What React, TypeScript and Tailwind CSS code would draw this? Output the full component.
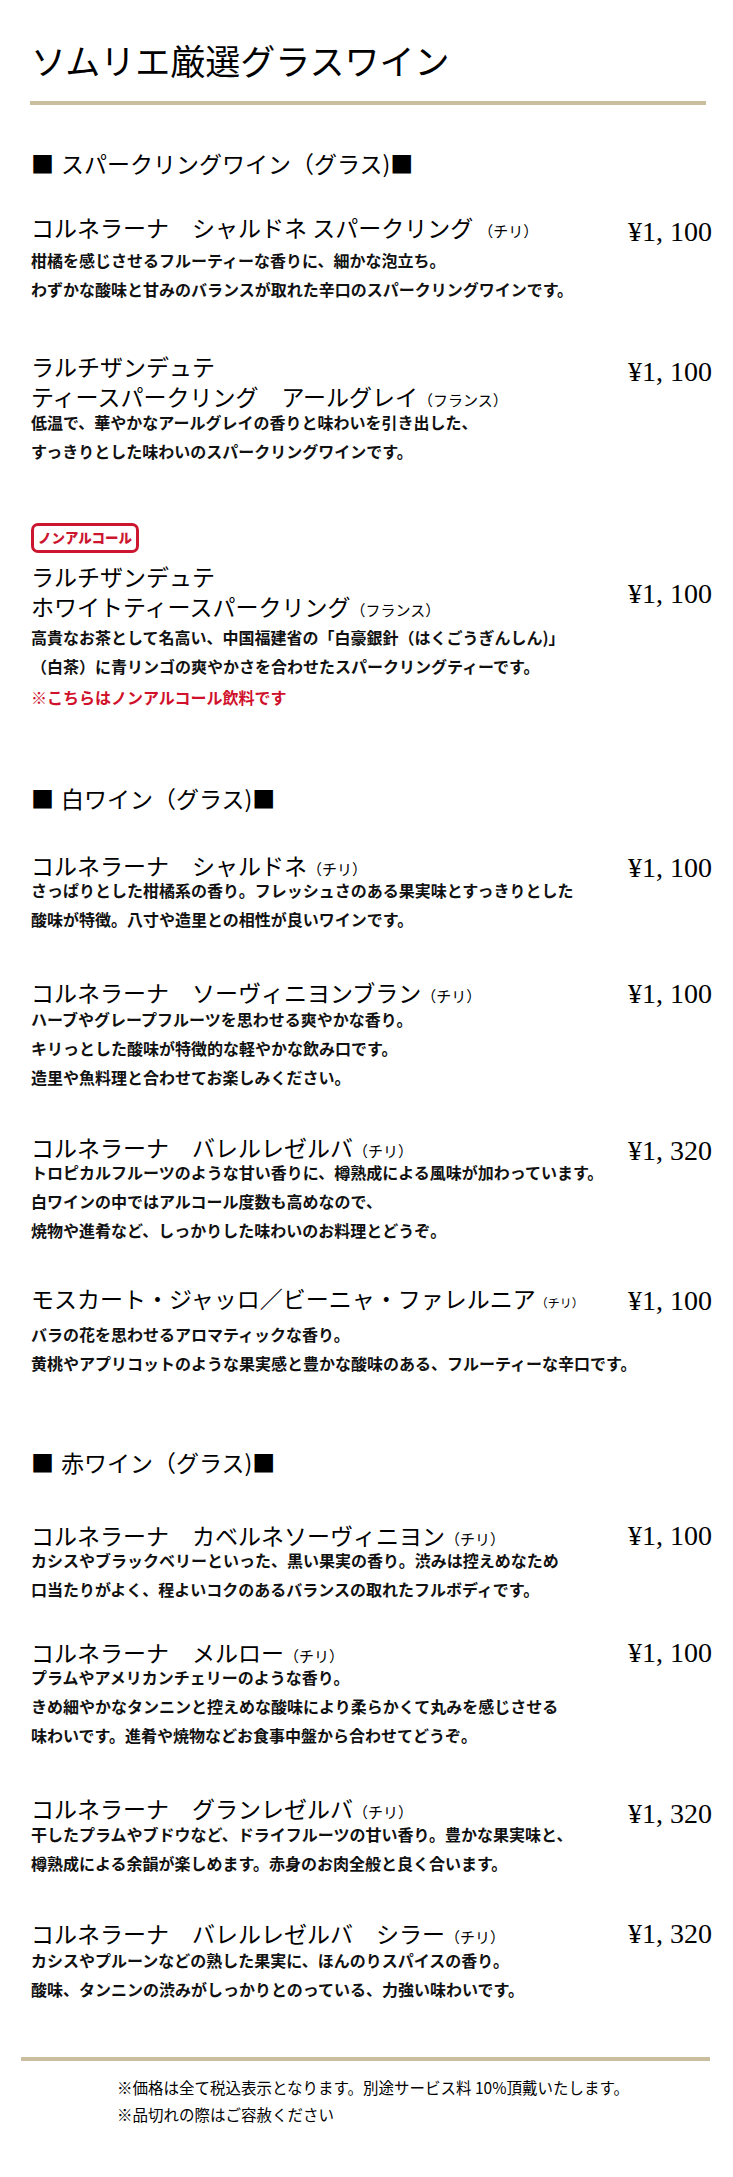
type Wine = {
  top: string;
  badge?: string;
  names: string[];
  origin: string;
  originSize?: string;
  price: string;
  priceTop: string;
  descTop: string;
  desc: string[];
  note?: string;
};

type Section = {
  top: string;
  title: string;
  wines: Wine[];
};

const SECTIONS: Section[] = [
  {
    top: 'mt-[43px]',
    title: 'スパークリングワイン（グラス)',
    wines: [
      {
        top: 'mt-[34px]',
        names: ['コルネラーナ　シャルドネ スパークリング '],
        origin: '（チリ）',
        price: '¥1, 100',
        priceTop: 'mt-[5px]',
        descTop: 'mt-[4px]',
        desc: [
          '柑橘を感じさせるフルーティーな香りに、細かな泡立ち。',
          'わずかな酸味と甘みのバランスが取れた辛口のスパークリングワインです。',
        ],
      },
      {
        top: 'mt-[47px]',
        names: ['ラルチザンデュテ', 'ティースパークリング　アールグレイ'],
        origin: '（フランス）',
        price: '¥1, 100',
        priceTop: 'mt-[6px]',
        descTop: '-mt-[3px]',
        desc: [
          '低温で、華やかなアールグレイの香りと味わいを引き出した、',
          'すっきりとした味わいのスパークリングワインです。',
        ],
      },
      {
        top: 'mt-[57px]',
        badge: 'ノンアルコール',
        names: ['ラルチザンデュテ', 'ホワイトティースパークリング'],
        origin: '（フランス）',
        price: '¥1, 100',
        priceTop: 'mt-[18px]',
        descTop: 'mt-[2px]',
        desc: [
          '高貴なお茶として名高い、中国福建省の「白豪銀針（はくごうぎんしん)」',
          '（白茶）に青リンゴの爽やかさを合わせたスパークリングティーです。',
        ],
        note: '※こちらはノンアルコール飲料です',
      },
    ],
  },
  {
    top: 'mt-[71px]',
    title: '白ワイン（グラス)',
    wines: [
      {
        top: 'mt-[37px]',
        names: ['コルネラーナ　シャルドネ'],
        origin: '（チリ）',
        price: '¥1, 100',
        priceTop: 'mt-[3px]',
        descTop: '-mt-[4px]',
        desc: [
          'さっぱりとした柑橘系の香り。フレッシュさのある果実味とすっきりとした',
          '酸味が特徴。八寸や造里との相性が良いワインです。',
        ],
      },
      {
        top: 'mt-[43px]',
        names: ['コルネラーナ　ソーヴィニヨンブラン'],
        origin: '（チリ）',
        price: '¥1, 100',
        priceTop: 'mt-[2px]',
        descTop: '-mt-[2px]',
        desc: [
          'ハーブやグレープフルーツを思わせる爽やかな香り。',
          'キリっとした酸味が特徴的な軽やかな飲み口です。',
          '造里や魚料理と合わせてお楽しみください。',
        ],
      },
      {
        top: 'mt-[40px]',
        names: ['コルネラーナ　バレルレゼルバ'],
        origin: '（チリ）',
        price: '¥1, 320',
        priceTop: 'mt-[4px]',
        descTop: '-mt-[4px]',
        desc: [
          'トロピカルフルーツのような甘い香りに、樽熟成による風味が加わっています。',
          '白ワインの中ではアルコール度数も高めなので、',
          '焼物や進肴など、しっかりした味わいのお料理とどうぞ。',
        ],
      },
      {
        top: 'mt-[38px]',
        names: ['モスカート・ジャッロ／ビーニャ・ファレルニア'],
        origin: '（チリ）',
        originSize: 'text-[12px]',
        price: '¥1, 100',
        priceTop: 'mt-[3px]',
        descTop: 'mt-[7px]',
        desc: [
          'バラの花を思わせるアロマティックな香り。',
          '黄桃やアプリコットのような果実感と豊かな酸味のある、フルーティーな辛口です。',
        ],
      },
    ],
  },
  {
    top: 'mt-[69px]',
    title: '赤ワイン（グラス)',
    wines: [
      {
        top: 'mt-[43px]',
        names: ['コルネラーナ　カベルネソーヴィニヨン'],
        origin: '（チリ）',
        price: '¥1, 100',
        priceTop: 'mt-[1px]',
        descTop: '-mt-[4px]',
        desc: [
          'カシスやブラックベリーといった、黒い果実の香り。渋みは控えめなため',
          '口当たりがよく、程よいコクのあるバランスの取れたフルボディです。',
        ],
      },
      {
        top: 'mt-[33px]',
        names: ['コルネラーナ　メルロー'],
        origin: '（チリ）',
        price: '¥1, 100',
        priceTop: 'mt-[1px]',
        descTop: '-mt-[4px]',
        desc: [
          'プラムやアメリカンチェリーのような香り。',
          'きめ細やかなタンニンと控えめな酸味により柔らかくて丸みを感じさせる',
          '味わいです。進肴や焼物などお食事中盤から合わせてどうぞ。',
        ],
      },
      {
        top: 'mt-[43px]',
        names: ['コルネラーナ　グランレゼルバ'],
        origin: '（チリ）',
        price: '¥1, 320',
        priceTop: 'mt-[6px]',
        descTop: '-mt-[3px]',
        desc: [
          '干したプラムやブドウなど、ドライフルーツの甘い香り。豊かな果実味と、',
          '樽熟成による余韻が楽しめます。赤身のお肉全般と良く合います。',
        ],
      },
      {
        top: 'mt-[40px]',
        names: ['コルネラーナ　バレルレゼルバ　シラー'],
        origin: '（チリ）',
        price: '¥1, 320',
        priceTop: 'mt-[1px]',
        descTop: '-mt-[2px]',
        desc: [
          'カシスやプルーンなどの熟した果実に、ほんのりスパイスの香り。',
          '酸味、タンニンの渋みがしっかりとのっている、力強い味わいです。',
        ],
      },
    ],
  },
];

function WineItem({ wine }: { wine: Wine }) {
  const lastName = wine.names.length - 1;

  return (
    <div className={wine.top}>
      {wine.badge && (
        <div className="mb-[8px] flex h-[30px] w-[108px] items-center justify-center rounded-[7px] border-[3px] border-[#cc1630] text-[13.5px] font-black leading-none text-[#cc1630]">
          {wine.badge}
        </div>
      )}
      <div className="flex items-start justify-between">
        <div className="min-w-0">
          {wine.names.map((name, index) => (
            <p className="whitespace-pre text-[23px] leading-[30px]" key={name}>
              {name}
              {index === lastName && (
                <span className={[wine.originSize ?? 'text-[15px]', 'leading-none'].join(' ')}>
                  {wine.origin}
                </span>
              )}
            </p>
          ))}
          <div className={wine.descTop}>
            {wine.desc.map((line) => (
              <p className="whitespace-nowrap text-[16px] font-bold leading-[29px] text-[#111]" key={line}>
                {line}
              </p>
            ))}
            {wine.note && (
              <p className="mt-[2px] whitespace-nowrap text-[16px] font-bold leading-[29px] text-[#d0112b]">
                {wine.note}
              </p>
            )}
          </div>
        </div>
        <p
          className={[
            "shrink-0 whitespace-pre font-['Liberation_Serif',serif] text-[28px] leading-[30px]",
            wine.priceTop,
          ].join(' ')}
        >
          {wine.price}
        </p>
      </div>
    </div>
  );
}

export default function App() {
  return (
    <div className="min-h-[2177px] bg-white font-['Noto_Sans_CJK_JP',sans-serif] text-black">
      <div className="ml-[31px] w-[681px] pb-[51px] pt-[40px]">
        <h1 className="text-[35px] font-normal leading-[40px]">ソムリエ厳選グラスワイン</h1>
        <div className="-ml-[1px] mt-[21px] h-[4px] w-[676px] bg-[#cbbe9f]" />

        {SECTIONS.map((section) => (
          <section key={section.title}>
            <h2 className={[section.top, 'whitespace-nowrap text-[23px] font-normal leading-[30px]'].join(' ')}>
              <span className="mr-[7px]">■</span>
              {section.title}■
            </h2>
            {section.wines.map((wine) => (
              <WineItem key={wine.names.join('')} wine={wine} />
            ))}
          </section>
        ))}

        <div className="-ml-[10px] mt-[53px] h-[4px] w-[689px] bg-[#cbbe9f]" />
        <div className="ml-[86px] mt-[13px] text-[15.5px] leading-[27px]">
          <p>※価格は全て税込表示となります。別途サービス料 10%頂戴いたします。</p>
          <p>※品切れの際はご容赦ください</p>
        </div>
      </div>
    </div>
  );
}
